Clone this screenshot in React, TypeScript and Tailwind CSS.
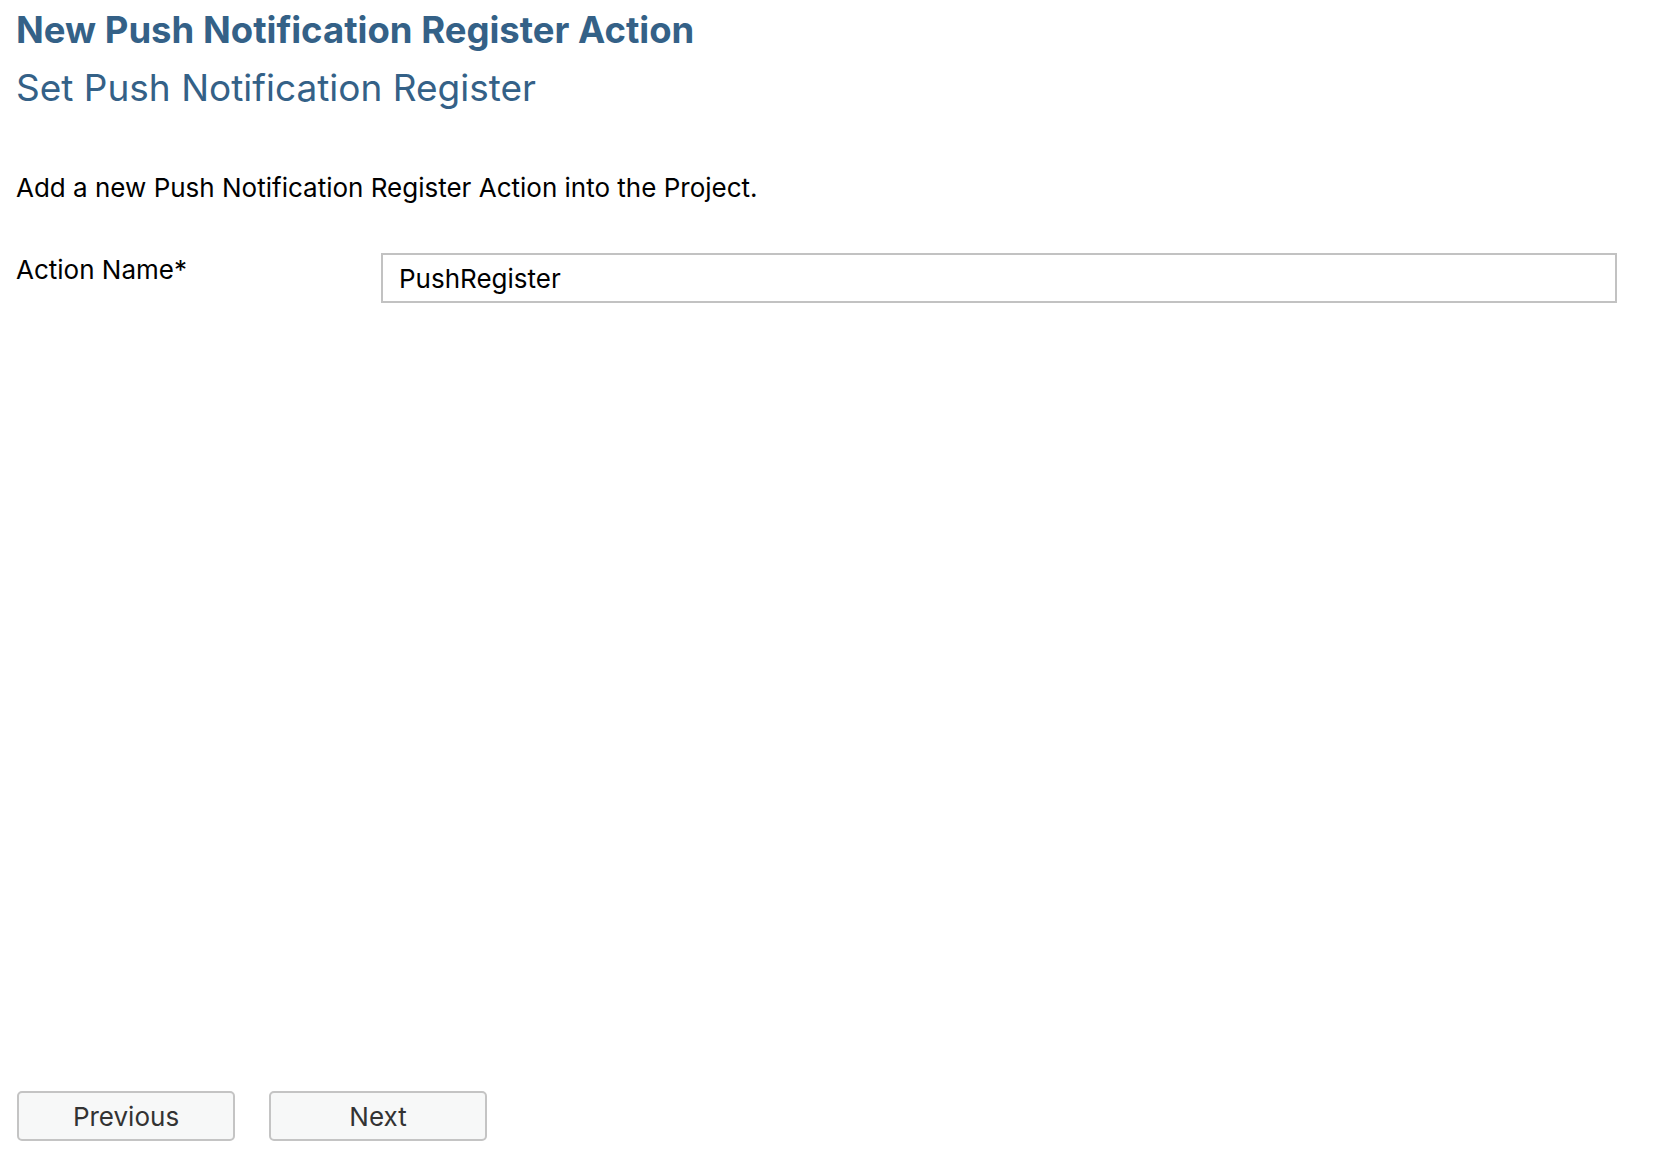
import React from "react";

// Wizard step: set push notification register action name
export default function App() {
  return (
    <div
      className="h-screen flex flex-col bg-white pl-4 pr-[39px] text-black"
      style={{ fontFamily: "Inter, 'Liberation Sans', sans-serif" }}
    >
      {/* Header */}
      <h1 className="pt-[9px] text-[36.5px] leading-[43px] font-bold text-[#346187]">
        New Push Notification Register Action
      </h1>
      <h2 className="mt-[14px] text-[37px] leading-[43px] font-normal text-[#346187]">
        Set Push Notification Register
      </h2>

      <p className="mt-[63px] text-[26px] leading-[31px]">
        Add a new Push Notification Register Action into the Project.
      </p>

      {/* Form row */}
      <div className="mt-[50px] flex items-start">
        <label className="w-[365px] shrink-0 pt-[1px] text-[26px] leading-[31px]">
          Action Name*
        </label>
        <input
          className="flex-1 h-[50px] border-2 border-[#c2c2c2] px-4 text-[26px] text-black outline-none"
          defaultValue="PushRegister"
        />
      </div>

      {/* Footer buttons */}
      <div className="mt-auto pb-[29px] pl-[1px] flex gap-[34px]">
        <button className="w-[218px] h-[50px] rounded-[5px] border-2 border-[#c4c4c4] bg-[#f7f8f8] text-[26px] text-[#333333]">
          Previous
        </button>
        <button className="w-[218px] h-[50px] rounded-[5px] border-2 border-[#c4c4c4] bg-[#f7f8f8] text-[26px] text-[#333333]">
          Next
        </button>
      </div>
    </div>
  );
}
